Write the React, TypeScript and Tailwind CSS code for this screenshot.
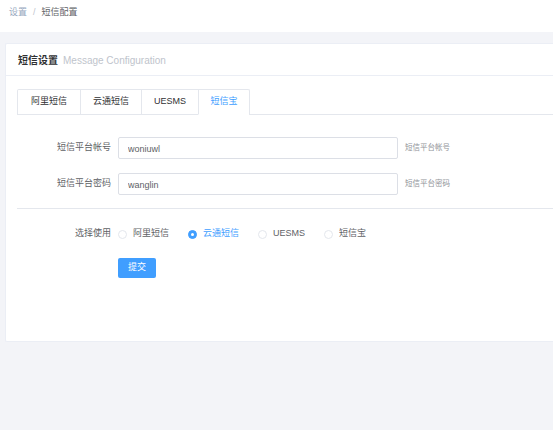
import { useState } from "react";

const tabs = ["阿里短信", "云通短信", "UESMS", "短信宝"];
const tabWidths = ["w-[62px]", "w-[61px]", "w-[57px]", "w-[51px]"];

const App = () => {
  const [activeTab, setActiveTab] = useState(3);
  const [provider, setProvider] = useState("云通短信");

  return (
    <div className="min-h-[430px] w-[553px] overflow-hidden bg-[#f3f4f8] font-['Liberation_Sans','Noto_Sans_CJK_SC',sans-serif] text-[#606266]">
      {/* breadcrumb */}
      <div className="flex h-[32px] items-center bg-white px-[9px] pb-[6px] text-[9px]">
        <span className="text-[#97a8be]">设置</span>
        <span className="mx-[6px] text-[#c0c4cc]">/</span>
        <span className="text-[#606266]">短信配置</span>
      </div>

      <div className="pl-[5px] pt-[11px]">
        <div className="h-[299px] w-[560px] rounded-l-[2px] border border-r-0 border-[#ebeef5] bg-white">
          <div className="flex h-[32px] items-center border-b border-[#ebeef5] px-[12px] pt-px">
            <span className="text-[10px] font-bold text-[#303133]">短信设置</span>
            <span className="ml-[5px] text-[10px] text-[#c0c4cc]">Message Configuration</span>
          </div>

          <div className="px-[11px] pt-[13px]">
            {/* tabs */}
            <div className="flex border-b border-[#e4e7ed]">
              <div className="-mb-px flex rounded-t-[2px] border border-b-0 border-[#e4e7ed]">
                {tabs.map((tab, i) => (
                  <button
                    key={tab}
                    onClick={() => setActiveTab(i)}
                    className={`flex h-[25px] items-center justify-center text-[9px] ${tabWidths[i]} ${
                      i > 0 ? "border-l border-[#e4e7ed]" : ""
                    } ${
                      activeTab === i
                        ? "border-b border-b-white text-[#409eff]"
                        : "border-b border-b-[#e4e7ed] text-[#303133]"
                    }`}
                  >
                    {tab}
                  </button>
                ))}
              </div>
            </div>

            {/* form */}
            <div className="pt-[22px]">
              <div className="flex items-center">
                <label className="w-[101px] pr-[7px] text-right text-[9px]">短信平台帐号</label>
                <input
                  defaultValue="woniuwl"
                  className="h-[22px] w-[280px] rounded-[2px] border border-[#dcdfe6] px-[9px] pt-px text-[9px] text-[#606266] outline-none"
                />
                <span className="ml-[7px] text-[7.5px] text-[#909399]">短信平台帐号</span>
              </div>
              <div className="mt-[14px] flex items-center">
                <label className="w-[101px] pr-[7px] text-right text-[9px]">短信平台密码</label>
                <input
                  defaultValue="wanglin"
                  className="h-[22px] w-[280px] rounded-[2px] border border-[#dcdfe6] px-[9px] pt-px text-[9px] text-[#606266] outline-none"
                />
                <span className="ml-[7px] text-[7.5px] text-[#909399]">短信平台密码</span>
              </div>
            </div>

            <div className="mt-[13px] border-t border-[#e4e7ed]" />

            <div className="mt-[19px] flex h-[12px] items-center">
              <label className="w-[101px] pr-[7px] text-right text-[9px] text-[#606266]">选择使用</label>
              <div className="flex items-center">
                {tabs.map((p, i) => (
                  <button
                    key={p}
                    onClick={() => setProvider(p)}
                    className={`flex items-center text-[9px] ${i > 0 ? "ml-[19px]" : ""} ${
                      provider === p ? "text-[#409eff]" : "text-[#606266]"
                    }`}
                  >
                    <span
                      className={`flex h-[9px] w-[9px] items-center justify-center rounded-full border ${
                        provider === p ? "border-[#409eff] bg-[#409eff]" : "border-[#e4e7ed] bg-white"
                      }`}
                    >
                      {provider === p && <span className="h-[3px] w-[3px] rounded-full bg-white" />}
                    </span>
                    <span className="ml-[6px]">{p}</span>
                  </button>
                ))}
              </div>
            </div>

            <div className="mt-[13px] pl-[101px]">
              <button className="h-[20px] w-[38px] rounded-[2px] bg-[#409eff] text-[9px] text-white">
                提交
              </button>
            </div>
          </div>
        </div>
      </div>
    </div>
  );
};

export default App;
